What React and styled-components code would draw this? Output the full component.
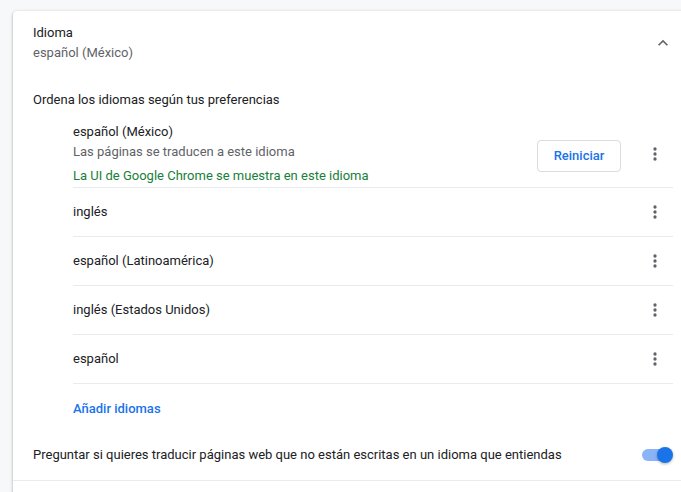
import React from 'react';
import styled, { createGlobalStyle } from 'styled-components';

const GlobalStyle = createGlobalStyle`
  body {
    margin: 0;
    background: #f7f8fa;
    font-family: Roboto, "Liberation Sans", Arial, sans-serif;
    font-size: 13px;
    color: #202124;
  }
`;

// idiomas de la lista
const languages = [
  { name: 'inglés' },
  { name: 'español (Latinoamérica)' },
  { name: 'inglés (Estados Unidos)' },
  { name: 'español' },
];

const MoreIcon = () => (
  <svg width="20" height="20" viewBox="0 0 24 24" fill="#5f6368">
    <circle cx="12" cy="6" r="2" />
    <circle cx="12" cy="12" r="2" />
    <circle cx="12" cy="18" r="2" />
  </svg>
);

const ChevronUp = () => (
  <svg width="20" height="20" viewBox="0 0 24 24" fill="#5f6368">
    <path d="M12 8l-6 6 1.41 1.41L12 10.83l4.59 4.58L18 14z" />
  </svg>
);

const LangRow = ({ name }) => (
  <Row>
    <Name>{name}</Name>
    <IconButton><MoreIcon /></IconButton>
  </Row>
);

const App = () => {
  return (
    <>
      <GlobalStyle />
      <Page>
        <Card>
          <Header>
            <div>
              <Title>Idioma</Title>
              <Secondary>español (México)</Secondary>
            </div>
            <IconButton><ChevronUp /></IconButton>
          </Header>

          <Prompt>Ordena los idiomas según tus preferencias</Prompt>

          <List>
            <FirstRow>
              <TextBlock>
                <Name>español (México)</Name>
                <Secondary>Las páginas se traducen a este idioma</Secondary>
                <Green>La UI de Google Chrome se muestra en este idioma</Green>
              </TextBlock>
              <OutlineButton>Reiniciar</OutlineButton>
              <IconButton><MoreIcon /></IconButton>
            </FirstRow>
            {languages.map((l, i) => (
              <LangRow key={i} name={l.name} />
            ))}
            <AddRow>
              <LinkText>Añadir idiomas</LinkText>
            </AddRow>
          </List>

          <ToggleRow>
            <span>Preguntar si quieres traducir páginas web que no están escritas en un idioma que entiendas</span>
            <Toggle><Knob /></Toggle>
          </ToggleRow>
          <Filler />
        </Card>
      </Page>
    </>
  );
};

export default App;

const Page = styled.div`
  height: 492px;
  overflow: hidden;
  padding: 11px 0 0 13px;
  box-sizing: border-box;
`;

const Card = styled.div`
  width: 678px;
  background: #fff;
  border-radius: 4px 0 0 0;
  box-shadow: 0 1px 2px rgba(60, 64, 67, 0.3), 0 1px 3px 1px rgba(60, 64, 67, 0.15);
`;

const Header = styled.div`
  display: flex;
  align-items: center;
  justify-content: space-between;
  padding: 12px 10px 0 20px;
  line-height: 20px;
`;

const Title = styled.div`
  color: #202124;
`;

const Secondary = styled.div`
  color: #5f6368;
  line-height: 20px;
`;

const IconButton = styled.div`
  width: 36px;
  height: 36px;
  display: flex;
  align-items: center;
  justify-content: center;
  flex-shrink: 0;
`;

const Prompt = styled.div`
  padding: 0 20px;
  margin-top: 27px;
  line-height: 20px;
`;

const List = styled.div`
  padding: 0 18px 0 60px;
  margin-top: 4px;
`;

const FirstRow = styled.div`
  display: flex;
  align-items: center;
  padding: 8px 0 1px;
  border-bottom: 1px solid #e8eaed;
`;

const TextBlock = styled.div`
  flex: 1;
  line-height: 20px;
`;

const Name = styled.div`
  flex: 1;
  line-height: 20px;
  color: #202124;
`;

const Green = styled.div`
  color: #188038;
  margin-top: 4px;
  line-height: 20px;
`;

const OutlineButton = styled.button`
  width: 84px;
  height: 32px;
  margin: 3px 16px 0 0;
  border: 1px solid #dadce0;
  border-radius: 4px;
  background: #fff;
  color: #1a73e8;
  font-family: inherit;
  font-size: 13px;
  font-weight: 500;
  padding: 0;
`;

const Row = styled.div`
  display: flex;
  align-items: center;
  height: 48px;
  border-bottom: 1px solid #e8eaed;
`;

const AddRow = styled.div`
  display: flex;
  align-items: center;
  height: 49px;
`;

const LinkText = styled.span`
  color: #1a73e8;
  font-weight: 500;
`;

const ToggleRow = styled.div`
  display: flex;
  align-items: center;
  justify-content: space-between;
  height: 48px;
  box-sizing: border-box;
  padding: 0 8px 4px 20px;
  border-bottom: 1px solid #e8eaed;
  line-height: 20px;
`;

const Toggle = styled.div`
  position: relative;
  width: 26px;
  height: 12px;
  margin-right: 15px;
  border-radius: 6px;
  background: #8ab4f8;
`;

const Knob = styled.div`
  position: absolute;
  right: -5px;
  top: -2px;
  width: 16px;
  height: 16px;
  border-radius: 50%;
  background: #1a73e8;
  box-shadow: 0 1px 3px rgba(0, 0, 0, 0.3);
`;

const Filler = styled.div`
  height: 30px;
`;
